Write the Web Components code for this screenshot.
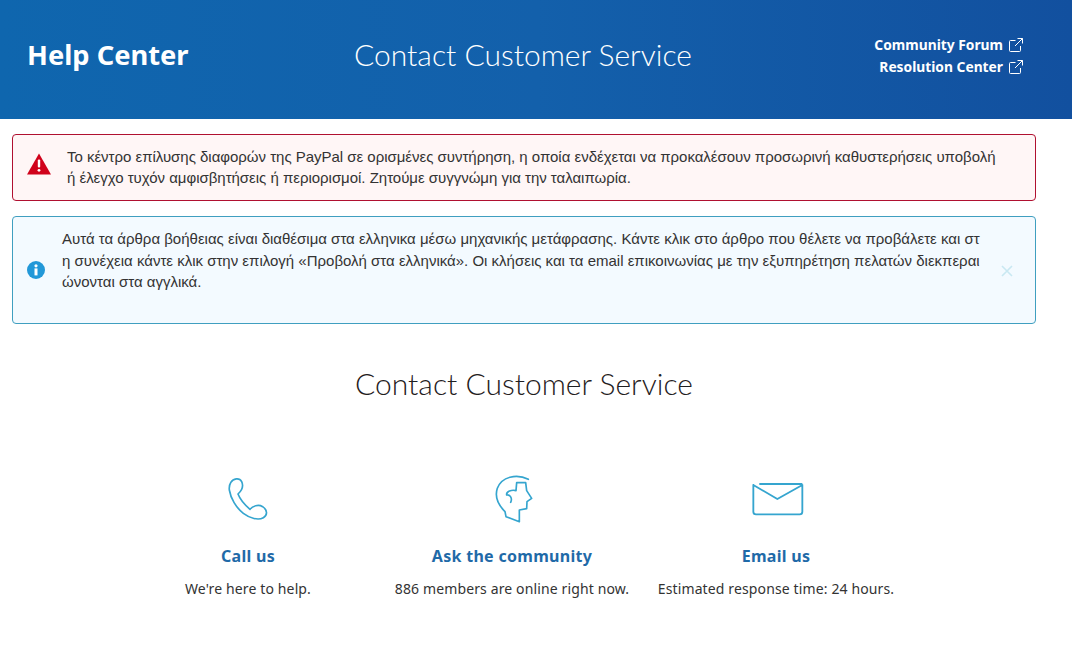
<!DOCTYPE html>
<html lang="en">
<head>
<meta charset="utf-8">
<title>Contact Customer Service</title>
<style>
  html, body { margin: 0; background: #fff; }
  body { font-family: "Noto Sans", "Liberation Sans", sans-serif; color: #2c2e2f; overflow: hidden; }
</style>
</head>
<body>
<help-header>
  <span slot="brand">Help Center</span>
  <span slot="title">Contact Customer Service</span>
  <ext-link>Community Forum</ext-link>
  <ext-link>Resolution Center</ext-link>
</help-header>
<page-main>
  <page-alert type="error">Το κέντρο επίλυσης διαφορών της PayPal σε ορισμένες συντήρηση, η οποία ενδέχεται να προκαλέσουν προσωρινή καθυστερήσεις υποβολή ή έλεγχο τυχόν αμφισβητήσεις ή περιορισμοί. Ζητούμε συγγνώμη για την ταλαιπωρία.</page-alert>
  <page-alert type="info" closable>Αυτά τα άρθρα βοήθειας είναι διαθέσιμα στα ελληνικα μέσω μηχανικής μετάφρασης. Κάντε κλικ στο άρθρο που θέλετε να προβάλετε και στη συνέχεια κάντε κλικ στην επιλογή «Προβολή στα ελληνικά». Οι κλήσεις και τα email επικοινωνίας με την εξυπηρέτηση πελατών διεκπεραιώνονται στα αγγλικά.</page-alert>
  <span slot="heading">Contact Customer Service</span>
  <contact-card slot="cards" icon="phone" heading="Call us">We're here to help.</contact-card>
  <contact-card slot="cards" icon="head" heading="Ask the community">886 members are online right now.</contact-card>
  <contact-card slot="cards" icon="mail" heading="Email us">Estimated response time: 24 hours.</contact-card>
</page-main>

<script>
class HelpHeader extends HTMLElement {
  constructor() {
    super();
    this.attachShadow({ mode: "open" });
  }
  connectedCallback() {
    this.shadowRoot.innerHTML = `
      <style>
        :host {
          display: grid;
          grid-template-columns: 1fr auto 1fr;
          align-items: center;
          height: 119px;
          width: 100%;
          box-sizing: border-box;
          padding: 0 48px 11px 22px;
          background: linear-gradient(90deg, #0f66ae 0%, #1360ab 50%, #12509f 100%);
          color: #fff;
        }
        .brand { font-size: 27.3px; font-weight: 700; padding-left: 5px; }
        .title { font-family: "Lato", sans-serif; font-size: 30px; font-weight: 300; }
        .links { display: flex; flex-direction: column; align-items: flex-end; gap: 3px; padding: 3px 1px 0 0; }
      </style>
      <div class="brand"><slot name="brand"></slot></div>
      <div class="title"><slot name="title"></slot></div>
      <div class="links"><slot></slot></div>
    `;
  }
}
customElements.define("help-header", HelpHeader);

class ExtLink extends HTMLElement {
  constructor() {
    super();
    this.attachShadow({ mode: "open" });
  }
  connectedCallback() {
    this.shadowRoot.innerHTML = `
      <style>
        :host { display: flex; align-items: center; gap: 6px; font-size: 13.8px; font-weight: 700; line-height: 19px; color: #fff; }
        svg { width: 14px; height: 14px; display: block; }
      </style>
      <slot></slot>
      <svg viewBox="0 0 14 14" fill="none" stroke="#fff" stroke-width="1">
        <path d="M6.5 2.5H1.5a1 1 0 0 0-1 1v9a1 1 0 0 0 1 1h9a1 1 0 0 0 1-1V8"/>
        <path d="M8.5.5h5v5M13.5.5L6 8"/>
      </svg>
    `;
  }
}
customElements.define("ext-link", ExtLink);

class PageMain extends HTMLElement {
  constructor() {
    super();
    this.attachShadow({ mode: "open" });
  }
  connectedCallback() {
    this.shadowRoot.innerHTML = `
      <style>
        :host { display: block; width: 1048px; box-sizing: border-box; padding-top: 15px; }
        .alerts { display: flex; flex-direction: column; gap: 15px; padding: 0 12px; }
        h1 { margin: 39px 0 0; text-align: center; font-family: "Lato", sans-serif; font-size: 30px; font-weight: 300; line-height: 40px; color: #1f2021; }
        .cards { display: grid; grid-template-columns: repeat(3, 264px); justify-content: center; margin-top: 69px; padding-right: 24px; }
      </style>
      <div class="alerts"><slot></slot></div>
      <h1><slot name="heading"></slot></h1>
      <div class="cards"><slot name="cards"></slot></div>
    `;
  }
}
customElements.define("page-main", PageMain);

class PageAlert extends HTMLElement {
  constructor() {
    super();
    this.attachShadow({ mode: "open" });
  }
  connectedCallback() {
    const isError = this.getAttribute("type") === "error";
    const icon = isError
      ? `<svg width="24" height="22" viewBox="0 0 24 22"><path d="M12 0.5L24 21.5H0Z" fill="#d0021b"/><rect x="10.8" y="6.5" width="2.4" height="8" rx="1" fill="#fff"/><circle cx="12" cy="17.3" r="1.4" fill="#fff"/></svg>`
      : `<svg width="18" height="18" viewBox="0 0 18 18"><circle cx="9" cy="9" r="9" fill="#2298d8"/><circle cx="9" cy="4.8" r="1.6" fill="#fff"/><rect x="7.5" y="7.4" width="3" height="7" fill="#fff"/></svg>`;
    this.shadowRoot.innerHTML = `
      <style>
        :host {
          display: flex;
          align-items: ${isError ? "center" : "stretch"};
          box-sizing: border-box;
          border: 1px solid ${isError ? "#b01030" : "#3f9fc0"};
          border-radius: 4px;
          background: ${isError ? "#fff6f6" : "#f3faff"};
          height: ${isError ? "67px" : "108px"};
          padding-left: 14px;
          font-family: "Liberation Sans", Arial, sans-serif;
          font-size: 15px;
          line-height: 21.5px;
          color: #333;
        }
        .icon { flex: none; display: flex; align-items: center; width: ${isError ? "40px" : "35px"}; padding-bottom: ${isError ? "8px" : "0"}; }
        .text { flex: none; width: ${isError ? "935px" : "919px"}; ${isError ? "padding-bottom: 1px; letter-spacing: -.02px;" : "word-break: break-all; padding-top: 11px;"} }
        .close { flex: 1; display: flex; align-items: center; justify-content: center; padding-right: 2px; padding-top: 1px; font-size: 0; }
      </style>
      <div class="icon">${icon}</div>
      <div class="text"><slot></slot></div>
      ${this.hasAttribute("closable") ? `<div class="close"><svg width="12" height="12" viewBox="0 0 12 12" stroke="#c9e8f2" stroke-width="1.6"><path d="M1 1l10 10M11 1L1 11"/></svg></div>` : ""}
    `;
  }
}
customElements.define("page-alert", PageAlert);

const CARD_ICONS = {
  phone: `<svg width="90" height="56" viewBox="9 36 270 168" fill="none" stroke="#35a5cf" stroke-width="5" stroke-linejoin="round"><path d="M92 68C100 55 118 52 125 65C131 78 125 92 114 102C120 118 135 135 150 148C158 138 175 132 188 140C203 150 203 165 190 173C175 182 150 175 130 160C108 143 92 115 88 90C87 80 88 74 92 68Z"/></svg>`,
  head: `<svg width="90" height="56" viewBox="-9 36 270 168" fill="none" stroke="#35a5cf" stroke-width="5" stroke-linejoin="round" stroke-linecap="round"><path d="M175 58C140 40 95 50 82 85C72 115 90 140 105 155L108 170L148 185L148 150L170 146L171 125L185 115L170 92L167 68L140 68L138 92C125 88 108 95 110 105C120 103 128 115 122 127"/></svg>`,
  mail: `<svg width="90" height="56" viewBox="3 21 270 168" fill="none" stroke="#35a5cf" stroke-width="5.500" stroke-linejoin="round" stroke-linecap="round"><path d="M90 57H215M70 60L142 102L217 60M70 60V140Q70 148 78 148H209Q217 148 217 140V60"/></svg>`
};

class ContactCard extends HTMLElement {
  constructor() {
    super();
    this.attachShadow({ mode: "open" });
  }
  connectedCallback() {
    this.shadowRoot.innerHTML = `
      <style>
        :host { display: flex; flex-direction: column; align-items: center; text-align: center; }
        .icon { height: 56px; display: flex; align-items: center; justify-content: center; }
        h2 { margin: 17px 0 0; font-size: 16px; font-weight: 700; line-height: 22px; letter-spacing: .3px; color: #1f6aa8; }
        p { margin: 12px 0 0; font-size: 14px; line-height: 20px; letter-spacing: .13px; color: #333; white-space: nowrap; }
      </style>
      <div class="icon">${CARD_ICONS[this.getAttribute("icon")]}</div>
      <h2>${this.getAttribute("heading")}</h2>
      <p><slot></slot></p>
    `;
  }
}
customElements.define("contact-card", ContactCard);
</script>
</body>
</html>
